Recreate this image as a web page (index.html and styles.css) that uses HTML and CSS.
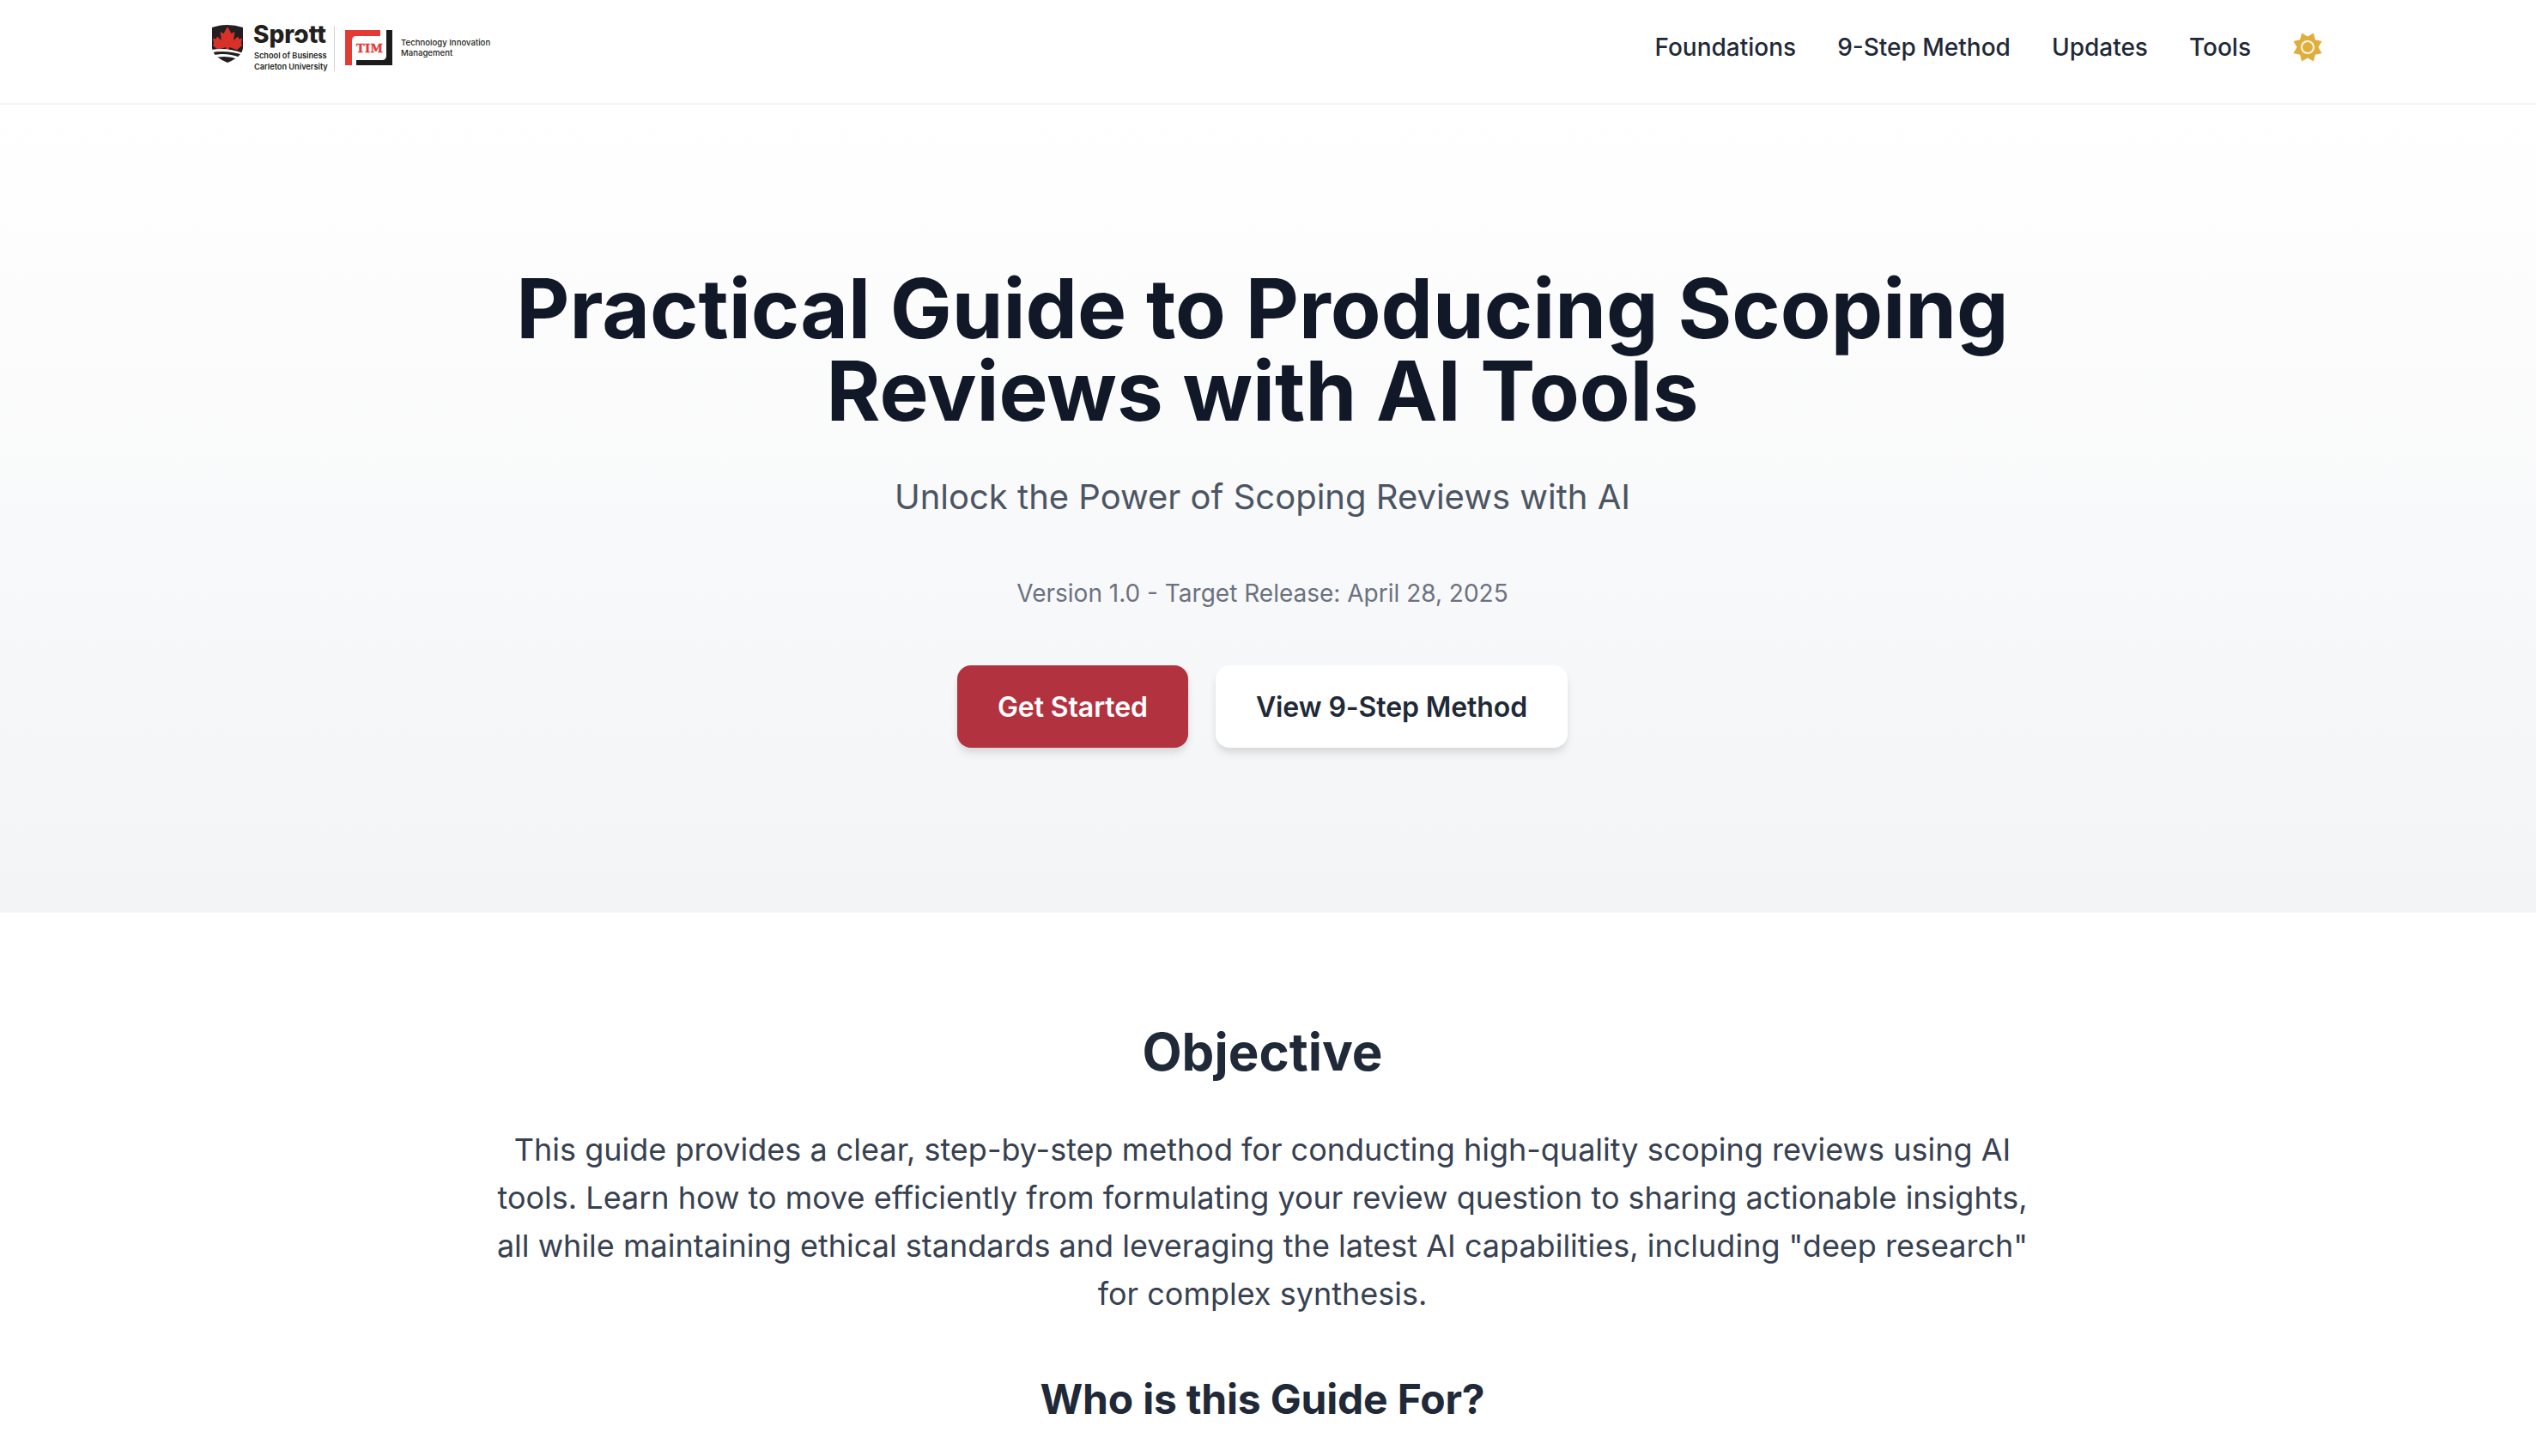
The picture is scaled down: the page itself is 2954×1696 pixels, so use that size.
FILE: index.html
```html
<!DOCTYPE html>
<html lang="en">
<head>
  <meta charset="UTF-8" />
  <meta name="viewport" content="width=device-width, initial-scale=1" />
  <title>Practical Guide to Producing Scoping Reviews with AI Tools</title>
  <link rel="stylesheet" href="styles.css">
</head>
<body>

  <!-- Header -->
  <header class="site-header">
    <div class="header-inner">
      <a class="logo" href="#" aria-label="Sprott School of Business and Technology Innovation Management">
        <svg class="logo-svg" viewBox="0 0 340 64" width="340" height="64">
          <path d="M7 9 Q25 3 43 9 L43 33 Q42 43 25 50 Q8 43 7 33 Z" fill="#231f20"/>
          <path d="M25 8 L29.5 16 L33.5 14 L32 24 L37 19.5 L38.5 22.5 L42 21.5 L41 28 L42 30 L36 35 L27 32 L26 37 L24 37 L23 32 L14 35 L8 30 L9 28 L8 21.5 L11.5 22.5 L13 19.5 L18 24 L16.5 14 L20.5 16 Z" fill="#d8312a"/>
          <path d="M7 35 Q24 32 43 39 L43 41 Q24 35 8 38 Z" fill="#fff"/>
          <path d="M10 41 Q24 38 40 44 L38 46 Q24 41 12 44 Z" fill="#fff"/>
          <text class="logo-sprott" x="55" y="27">Sprott</text>
          <path d="M101 20 Q107 16 114 20 L112 22 Q107 19 102 22 Z" fill="#fff"/>
          <text class="logo-small" x="56" y="45">School of Business</text>
          <text class="logo-small" x="56" y="58">Carleton University</text>
          <rect x="149" y="7" width="1" height="53" fill="#d4d4d4"/>
          <path d="M162 12 H203 V19 H175 Q170 19 170 24 V53 H162 Z" fill="#e23b36"/>
          <path d="M210 12 H217 V53 H175 V47 H205 Q210 47 210 42 Z" fill="#1b1b1b"/>
          <text class="logo-tim" x="175" y="38" textLength="31">TIM</text>
          <text class="logo-tech" x="227" y="30">Technology Innovation</text>
          <text class="logo-tech" x="227" y="42">Management</text>
        </svg>
      </a>
      <nav class="main-nav">
        <a href="#">Foundations</a>
        <a href="#">9-Step Method</a>
        <a href="#">Updates</a>
        <a href="#">Tools</a>
        <button class="theme-btn" type="button" aria-label="Toggle theme">
          <svg viewBox="0 0 36 36" width="36" height="36">
            <path d="M18 5.5 L24.9 1.4 L26.84 9.16 L34.6 11.1 L30.5 18 L34.6 24.9 L26.84 26.84 L24.9 34.6 L18 30.5 L11.1 34.6 L9.16 26.84 L1.4 24.9 L5.5 18 L1.4 11.1 L9.16 9.16 L11.1 1.4 Z" fill="#e0ae3c"/>
            <circle cx="18" cy="18" r="7" fill="none" stroke="#fdf8ea" stroke-width="2"/>
          </svg>
        </button>
      </nav>
    </div>
  </header>

  <!-- Hero -->
  <section class="hero">
    <h1>Practical Guide to Producing Scoping<br>Reviews with AI Tools</h1>
    <p class="hero-sub">Unlock the Power of Scoping Reviews with AI</p>
    <p class="hero-version">Version 1.0 - Target Release: April 28, 2025</p>
    <div class="hero-buttons">
      <a class="btn btn-primary" href="#">Get Started</a>
      <a class="btn btn-light" href="#">View 9-Step Method</a>
    </div>
  </section>

  <!-- Objective -->
  <section class="objective">
    <h2>Objective</h2>
    <p>This guide provides a clear, step-by-step method for conducting high-quality scoping reviews using AI tools. Learn how to move efficiently from formulating your review question to sharing actionable insights, all while maintaining ethical standards and leveraging the latest AI capabilities, including "deep research" for complex synthesis.</p>
    <h3>Who is this Guide For?</h3>
  </section>

</body>
</html>
```

FILE: styles.css
```css
* {
  box-sizing: border-box;
}

html, body {
  height: 100%;
}

body {
  margin: 0;
  overflow: hidden;
  background: #fff;
  color: #1f2937;
  font-family: Inter, "Noto Sans", sans-serif;
}

a {
  text-decoration: none;
  color: inherit;
}

/* Header */
.site-header {
  height: 122px;
  padding: 0 10px 10px 0;
  background: #fff;
  border-bottom: 2px solid #f3f4f6;
}

.header-inner {
  max-width: 2560px;
  height: 100%;
  margin: 0 auto;
  padding: 0 48px;
  display: flex;
  justify-content: space-between;
  align-items: center;
}

.logo {
  display: flex;
}

.logo-svg {
  display: block;
}

.logo-sprott {
  font: 800 28px "Inter", sans-serif;
  fill: #231f20;
}

.logo-small {
  font: 600 9.2px "Inter", sans-serif;
  fill: #231f20;
}

.logo-tim {
  font: 700 13px "DejaVu Serif", serif;
  fill: #e23b36;
  stroke: #e23b36;
  stroke-width: 0.4px;
}

.logo-tech {
  font: 500 9.6px "Inter", sans-serif;
  fill: #231f20;
}

.main-nav {
  display: flex;
  align-items: center;
  gap: 48px;
  margin-right: -2px;
  font-size: 28px;
  font-weight: 500;
}

.theme-btn {
  display: flex;
  padding: 0;
  border: none;
  background: none;
  cursor: pointer;
}

/* Hero */
.hero {
  height: 941px;
  padding: 189px 13px 0 0;
  text-align: center;
  background: linear-gradient(to bottom, #fff, #f3f4f6);
}

.hero h1 {
  margin: 0 0 48px;
  font-size: 96px;
  line-height: 96px;
  font-weight: 700;
  color: #111827;
}

.hero-sub {
  margin: 0 0 64px;
  font-size: 40px;
  line-height: 56px;
  color: #4b5563;
}

.hero-version {
  margin: 0 0 64px;
  font-size: 28px;
  line-height: 40px;
  color: #6b7280;
}

.hero-buttons {
  display: flex;
  justify-content: center;
  gap: 32px;
}

.btn {
  padding: 0 47px;
  height: 96px;
  display: flex;
  align-items: center;
  border-radius: 16px;
  font-size: 32px;
  font-weight: 600;
  letter-spacing: -0.1px;
  box-shadow: 0 8px 12px -2px rgba(0, 0, 0, 0.1), 0 4px 8px -2px rgba(0, 0, 0, 0.06);
}

.btn-primary {
  background: #b3323f;
  color: #fff;
}

.btn-light {
  background: #fff;
  color: #1f2937;
}

/* Objective */
.objective {
  padding: 126px 13px 0 0;
  text-align: center;
}

.objective h2 {
  margin: 0 0 50px;
  font-size: 60px;
  line-height: 72px;
  font-weight: 700;
  color: #1f2937;
}

.objective p {
  width: 1792px;
  margin: 0 auto 63px;
  font-size: 36px;
  line-height: 56px;
  color: #374151;
}

.objective h3 {
  margin: 0;
  font-size: 48px;
  line-height: 64px;
  font-weight: 700;
  letter-spacing: -0.2px;
  color: #1f2937;
}
```
